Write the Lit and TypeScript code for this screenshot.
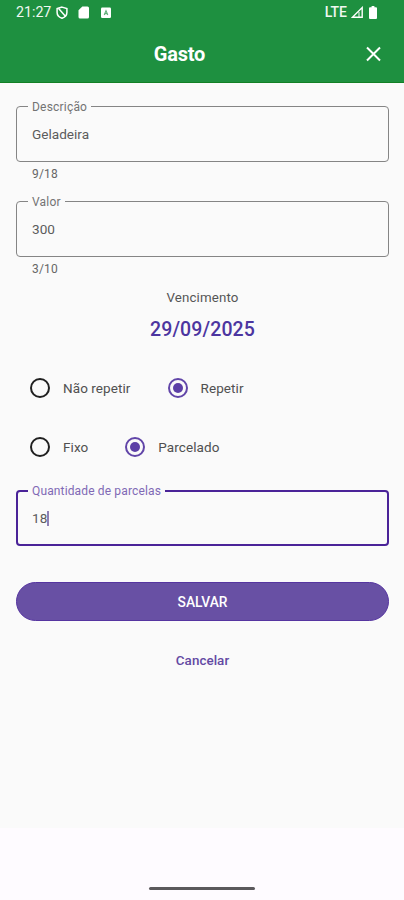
import { LitElement, html, css, svg } from "lit";
import { customElement, property } from "lit/decorators.js";
import { classMap } from "lit/directives/class-map.js";

@customElement("text-field")
class TextField extends LitElement {
  @property() label = "";
  @property() value = "";
  @property() counter = "";
  @property({ type: Boolean }) active = false;

  static styles = css`
    :host { display: block; }
    .box {
      position: relative;
      box-sizing: border-box;
      height: 56px;
      border: 1px solid #858585;
      border-radius: 4px;
      padding-left: 15px;
      display: flex;
      align-items: center;
      font-size: 13.6px;
      color: #5c5c5c;
    }
    .box.active { border: 2px solid #4a2398; padding-left: 14px; }
    .label {
      position: absolute;
      left: 11px;
      top: -7px;
      height: 14px;
      line-height: 14px;
      padding: 0 4px;
      background: #fafafa;
      font-size: 12px;
      letter-spacing: 0.2px;
      color: #737373;
    }
    .active .label { left: 10px; top: -8px; letter-spacing: 0.14px; color: #8069b5; }
    .caret { width: 2px; height: 15px; background: #8f80b5; }
    .counter {
      padding-left: 16px;
      margin-top: 5px;
      height: 14px;
      line-height: 14px;
      font-size: 12px;
      letter-spacing: 0.2px;
      color: #666;
    }
  `;

  render() {
    return html`
      <div class=${classMap({ box: true, active: this.active })}>
        <span class="label">${this.label}</span>
        <span>${this.value}</span>
        ${this.active ? html`<span class="caret"></span>` : null}
      </div>
      ${this.counter ? html`<div class="counter">${this.counter}</div>` : null}
    `;
  }
}

@customElement("radio-option")
class RadioOption extends LitElement {
  @property({ type: Boolean }) checked = false;

  static styles = css`
    :host {
      display: flex;
      align-items: center;
      gap: 13px;
      font-size: 13.5px;
      letter-spacing: 0.08px;
      color: #505050;
    }
    .ring {
      box-sizing: border-box;
      width: 20px;
      height: 20px;
      border: 2px solid #202020;
      border-radius: 50%;
      display: grid;
      place-items: center;
    }
    .ring.on { border-color: #6145a8; }
    .on::after {
      content: "";
      width: 10px;
      height: 10px;
      border-radius: 50%;
      background: #5c3fa6;
    }
  `;

  render() {
    return html`<span class=${classMap({ ring: true, on: this.checked })}></span><span><slot></slot></span>`;
  }
}

const blocked = svg`<g fill="none" stroke="#fff" stroke-width="1.5"><path d="M6 1.1L10.9 2.6V6.4C10.9 9 9 11.1 6 12.2C3 11.1 1.1 9 1.1 6.4V2.6Z"/><path d="M2.6 2.4L9.6 10.4"/></g>`;
const sdCard = svg`<path fill="#fff" d="M4.3 0.5H9.5Q11 0.5 11 2V11Q11 12.5 9.5 12.5H2Q0.5 12.5 0.5 11V4.3Z"/>`;
const keyboard = svg`<rect x="1" y="1.5" width="10" height="10.5" rx="1.2" fill="#fff"/><path d="M4.2 9L6 4.6L7.8 9M4.8 7.6H7.2" fill="none" stroke="#5fae78" stroke-width="1.1"/>`;
const signal = svg`<path d="M1.4 11.3H11.2V1.6Z" fill="none" stroke="#fff" stroke-width="1.4"/><path d="M8 6V11" stroke="#fff" stroke-width="1"/>`;
const battery = svg`<path fill="#fff" d="M2.6 0H5.4V1.2H7Q8 1.2 8 2.2V11.8Q8 13 7 13H1Q0 13 0 11.8V2.2Q0 1.2 1 1.2H2.6Z"/>`;

@customElement("app-root")
class AppRoot extends LitElement {
  static styles = css`
    :host {
      display: flex;
      flex-direction: column;
      height: 900px;
      background: #fefbff;
      font-family: Roboto, "Liberation Sans", sans-serif;
    }
    svg { display: block; }
    header { height: 83px; box-sizing: border-box; background: #1e9040; border-bottom: 1px solid #128025; color: #fff; }
    .status {
      display: flex;
      align-items: center;
      height: 24px;
      padding: 0 27px 0 16px;
      font-size: 14.2px;
      color: #f0f8f1;
    }
    .status .blocked { margin-left: 5px; }
    .status .card { margin-left: 10px; }
    .status .keyboard { margin-left: 10px; }
    .status .network { margin-left: auto; font-size: 14px; font-weight: 500; }
    .status .signal { margin-left: 4px; }
    .status .battery { margin-left: 6px; }
    .bar {
      display: flex;
      align-items: center;
      height: 59px;
      padding: 1px 22px 0 0;
      box-sizing: border-box;
    }
    .title {
      flex: 1;
      padding-left: 18px;
      margin-right: 23px;
      box-sizing: border-box;
      text-align: center;
      font-size: 20px;
      font-weight: 700;
      letter-spacing: -0.2px;
    }
    main {
      height: 745px;
      box-sizing: border-box;
      padding: 23px 15px 0 16px;
      background: #fafafa;
    }
    .second { margin-top: 20px; }
    .due { margin-top: 14px; text-align: center; }
    .due-label { height: 16px; line-height: 16px; font-size: 13.3px; letter-spacing: 0.15px; color: #555; }
    .date { margin-top: 12px; height: 24px; line-height: 24px; font-size: 19.5px; font-weight: 500; letter-spacing: 0.1px; color: #4c35a0; }
    .options { display: flex; padding-left: 14px; height: 20px; gap: 37px; }
    .repeat { margin-top: 36px; }
    .kind { margin-top: 39px; }
    .quantity { margin-top: 33px; }
    .save {
      margin-top: 36px;
      width: 100%;
      height: 39px;
      display: grid;
      place-items: center;
      box-sizing: border-box;
      border: 1px solid #5635a0;
      border-radius: 20px;
      background: #6850a4;
      color: #fff;
      font-size: 13.8px;
      font-weight: 500;
    }
    .cancel { margin-top: 32px; text-align: center; height: 16px; line-height: 16px; font-size: 13.4px; font-weight: 500; letter-spacing: 0.05px; color: #6349a3; }
    footer { flex: 1; display: flex; justify-content: center; align-items: flex-end; padding-bottom: 10px; }
    .handle { width: 106px; height: 3px; border-radius: 2px; background: #5b595c; }
  `;

  render() {
    return html`
      <header>
        <div class="status">
          <span>21:27</span>
          <svg class="blocked" width="12" height="13">${blocked}</svg>
          <svg class="card" width="12" height="13">${sdCard}</svg>
          <svg class="keyboard" width="12" height="13">${keyboard}</svg>
          <span class="network">LTE</span>
          <svg class="signal" width="12" height="13">${signal}</svg>
          <svg class="battery" width="8" height="13">${battery}</svg>
        </div>
        <div class="bar">
          <span class="title">Gasto</span>
          <svg width="18" height="20"><path d="M3 3.5L16 16.5M16 3.5L3 16.5" stroke="#fff" stroke-width="2" /></svg>
        </div>
      </header>
      <main>
        <text-field label="Descrição" value="Geladeira" counter="9/18"></text-field>
        <text-field class="second" label="Valor" value="300" counter="3/10"></text-field>
        <div class="due">
          <div class="due-label">Vencimento</div>
          <div class="date">29/09/2025</div>
        </div>
        <div class="options repeat">
          <radio-option>Não repetir</radio-option>
          <radio-option checked>Repetir</radio-option>
        </div>
        <div class="options kind">
          <radio-option>Fixo</radio-option>
          <radio-option checked>Parcelado</radio-option>
        </div>
        <text-field class="quantity" active label="Quantidade de parcelas" value="18"></text-field>
        <div class="save">SALVAR</div>
        <div class="cancel">Cancelar</div>
      </main>
      <footer><div class="handle"></div></footer>
    `;
  }
}
